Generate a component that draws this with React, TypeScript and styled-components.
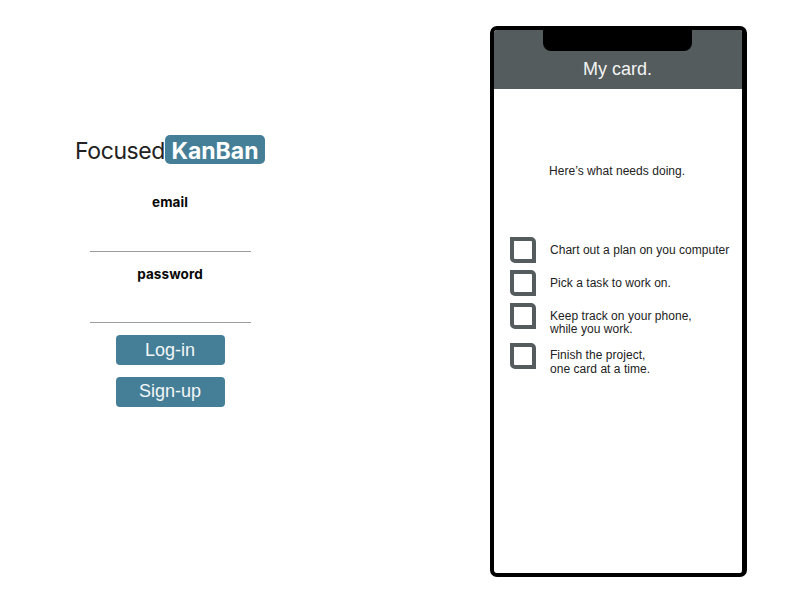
import React from "react";
import styled, { createGlobalStyle } from "styled-components";

const teal = "#457f97";
const slate = "#545c5e";

const GlobalStyle = createGlobalStyle`
  * { box-sizing: border-box; }
  body { margin: 0; background: #fff; overflow: hidden; }
`;

const Page = styled.main`
  display: grid;
  grid-template-columns: 340px 257px;
  column-gap: 149.6px;
  align-items: start;
  width: 800px;
  height: 600px;
  font-family: "Liberation Sans", Arial, sans-serif;
`;

const Login = styled.form`
  display: flex;
  flex-direction: column;
  align-items: center;
  padding-top: 135px;
`;

const Brand = styled.h1`
  display: flex;
  height: 29px;
  margin: 0 0 31px;
  font: 400 23px/32px Inter, sans-serif;
  letter-spacing: -0.42px;
  color: #222;
`;

const BrandBadge = styled.span`
  width: 100px;
  height: 29px;
  border-radius: 5px;
  background: ${teal};
  color: #fff;
  font-weight: 700;
  letter-spacing: 0;
  text-align: center;
`;

const Field = styled.label<{ $gap: number }>`
  display: flex;
  flex-direction: column;
  width: 161px;
  height: 57px;
  margin-bottom: ${(p) => p.$gap}px;
  text-align: center;
  font: 700 13.5px/15px Inter, sans-serif;
  letter-spacing: 0.1px;
  color: #080808;
`;

const Input = styled.input`
  flex: 1;
  width: 100%;
  min-height: 0;
  padding: 0;
  border: 0;
  border-bottom: 1px solid #9c9c9c;
  outline: 0;
  background: transparent;
`;

const FieldName = styled.span<{ $offset: number }>`
  height: 17px;
  padding-top: ${(p) => p.$offset}px;
`;

const Button = styled.button`
  width: 109px;
  height: 30px;
  margin: 0 0 11.5px;
  padding: 0;
  border: 0;
  border-radius: 4px;
  background: ${teal};
  color: #f2f6f8;
  font: 18px/29px "Liberation Sans", Arial, sans-serif;
`;

const Phone = styled.section`
  position: relative;
  height: 551.5px;
  margin-top: 25.5px;
  border: solid #000;
  border-width: 4px 5px 4px 4px;
  border-radius: 7px;
  overflow: hidden;
`;

const Notch = styled.div`
  position: absolute;
  top: -1px;
  left: 49.5px;
  width: 149px;
  height: 22px;
  border-radius: 0 0 8px 8px;
  background: #000;
`;

const PhoneHeader = styled.header`
  height: 59.5px;
  padding-top: 29.5px;
  background: ${slate};
  color: #f3f4f4;
  font-size: 18px;
  line-height: 21px;
  text-align: center;
`;

const Intro = styled.p`
  margin: 75px 0 59px 55.4px;
  font-size: 12px;
  line-height: 14px;
  letter-spacing: 0.04px;
  color: #222;
`;

const Tasks = styled.ul`
  margin: 0;
  padding: 0 0 0 16px;
  list-style: none;
`;

const Task = styled.li<{ $height: number }>`
  display: flex;
  gap: 14.4px;
  height: ${(p) => p.$height}px;
  font-size: 12px;
  line-height: 13.5px;
  letter-spacing: 0.04px;
  color: #222;
  white-space: pre;
`;

const Check = styled.span`
  flex: none;
  width: 26px;
  height: 26px;
  border: 4px solid ${slate};
  border-radius: 0 5px 0 5px;
`;

const TaskText = styled.span`
  padding-top: 6.5px;
`;

const tasks = [
  { text: "Chart out a plan on you computer", height: 33.3 },
  { text: "Pick a task to work on.", height: 33.2 },
  { text: "Keep track on your phone,\nwhile you work.", height: 39.5 },
  { text: "Finish the project,\none card at a time.", height: 40 },
];

export default function App() {
  return (
    <>
      <GlobalStyle />
      <Page>
        <Login>
          <Brand>
            Focused<BrandBadge>KanBan</BrandBadge>
          </Brand>
          <Field $gap={14}>
            <FieldName $offset={0}>email</FieldName>
            <Input type="email" />
          </Field>
          <Field $gap={12}>
            <FieldName $offset={1}>password</FieldName>
            <Input type="password" />
          </Field>
          <Button type="button">Log-in</Button>
          <Button type="button">Sign-up</Button>
        </Login>
        <Phone>
          <PhoneHeader>My card.</PhoneHeader>
          <Notch />
          <Intro>Here’s what needs doing.</Intro>
          <Tasks>
            {tasks.map((task) => (
              <Task key={task.text} $height={task.height}>
                <Check />
                <TaskText>{task.text}</TaskText>
              </Task>
            ))}
          </Tasks>
        </Phone>
      </Page>
    </>
  );
}
